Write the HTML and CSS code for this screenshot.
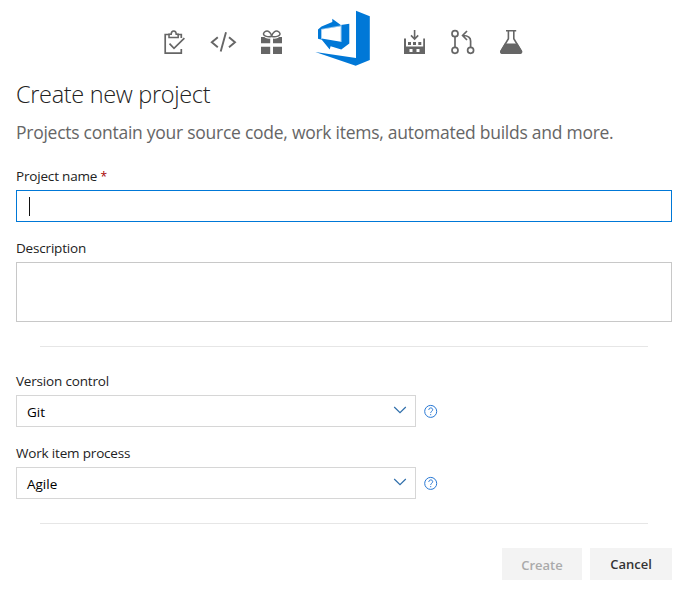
FILE: index.html
```html
<!DOCTYPE html>
<html lang="en">
<head>
<meta charset="utf-8">
<title>Create new project</title>
<link rel="stylesheet" href="styles.css">
</head>
<body>
<main class="page">
  <header class="icons">
    <svg width="24" height="26" viewBox="163 29 24 26" fill="none" stroke="#666" stroke-width="1.7"><path d="M170 34.5H165.2V53.2H181.3V49M181.3 38V34.5H177"/><path d="M169 37.6V34.2H171.2C171.2 29.8 176.2 29.8 176.2 34.2H178.2V37.6Z" stroke-width="1.5"/><path d="M169.5 43.7L174 48.3L184.4 38.2"/></svg>
    <svg class="code" width="28" height="26" viewBox="209 29 28 26" fill="none" stroke="#666" stroke-width="1.9"><path d="M217.8 37.2L211.8 42.2L217.8 47.2M229 37.2L235 42.2L229 47.2M226 32.2L220.7 51.4"/></svg>
    <svg class="gift" width="24" height="26" viewBox="260 29 24 26"><path fill="#666" d="M261 37H270.2V43.3H261ZM273 37H282V43.3H273ZM261 46.7H270.2V54H261ZM273 46.7H282V54H273Z"/><path fill="none" stroke="#fff" stroke-width="3" d="M271.7 36.5C269 38 262 36.5 265 32.5C268 29.5 271 33 271.7 36.5C272.5 33 275.5 29.5 278.5 32.5C281.5 36.5 274.5 38 271.7 36.5"/><path fill="none" stroke="#666" stroke-width="1.5" d="M271.7 36.2C269 37.5 260.5 36 264.5 32C268 29.5 271 32.5 271.7 36.2C272.5 32.5 275.5 29.5 279 32C283 36 274.5 37.5 271.7 36.2"/></svg>
    <svg class="logo" width="56" height="57" viewBox="315 10 56 57"><path fill="#0078d7" d="M356 10.7L369.8 16.3V60L355.7 65.8L315.3 52L356 58ZM318 29.4L321.5 26.6L332.3 22V18.7L340.8 25L349.3 23.7V43.5L341.3 49.4L330.6 46.3L329.7 49.6L321.8 39.8L318 38.7Z"/><path fill="#fff" d="M321.7 29.6L340.8 26.2V41.8L321.7 38.6Z"/><path fill="none" stroke="#fff" stroke-width=".5" d="M321.5 39V29.3L341 25.8M341.2 25V42"/></svg>
    <svg class="build" width="24" height="26" viewBox="403 29 24 26"><path fill="#666" d="M404 38.5H406V46.5H423.2V38.5H425V54H404ZM408 42H411V45H408ZM413 42H416V45H413ZM418.3 42H421.3V45H418.3Z"/><path fill="#fff" d="M409.5 49H412.5V52H409.5ZM416.5 49H419.5V52H416.5Z"/><path fill="none" stroke="#666" stroke-width="1.6" d="M414.6 30V38.7M411 35.4L414.6 39L418.2 35.4"/></svg>
    <svg class="pull" width="26" height="26" viewBox="449 29 26 26" fill="none" stroke="#666" stroke-width="1.7"><circle cx="455" cy="33.7" r="3"/><circle cx="455" cy="50.3" r="3"/><circle cx="470.6" cy="50.3" r="3"/><path d="M455 36.7V47.3M470.6 47.3V41Q470.6 35.6 463 35.5M467 31L462.6 35.5L467 40"/></svg>
    <svg class="flask" width="24" height="26" viewBox="499 29 24 26"><path fill="none" stroke="#666" stroke-width="1.6" d="M506 30.8H516.2M508.4 31V38.7L501 51Q500.4 53.2 502.5 53.2H519.8Q522 53.2 521.3 51L513.8 38.7V31"/><path fill="#666" d="M504.8 43.5H517.5L522.2 51.2Q522.4 54 519.8 54H502.5Q499.8 54 500.2 51.2Z"/></svg>
  </header>
  <h1 class="title">Create new project</h1>
  <p class="subtitle">Projects contain your source code, work items, automated builds and more.</p>
  <form class="form">
    <div class="label"><span>Project name</span> <span class="required">*</span></div>
    <div class="field active"><span class="caret"></span></div>
    <div class="label desc">Description</div>
    <div class="field area"></div>
    <hr class="rule">
    <div class="label version">Version control</div>
    <div class="row">
      <div class="select"><span>Git</span><svg width="14" height="8" viewBox="0 0 14 8"><path class="chevron" d="M1.2 1L7 6.6L12.8 1"/></svg></div>
      <svg class="help" width="14" height="14" viewBox="0 0 14 14"><circle cx="6.7" cy="7.4" r="6"/><path d="M4.8 5.9C4.8 3.3 8.7 3.3 8.7 5.7C8.7 7.2 6.7 7.2 6.7 8.9M6.7 10.1V11.2"/></svg>
    </div>
    <div class="label process">Work item process</div>
    <div class="row">
      <div class="select"><span>Agile</span><svg width="14" height="8" viewBox="0 0 14 8"><path class="chevron" d="M1.2 1L7 6.6L12.8 1"/></svg></div>
      <svg class="help" width="14" height="14" viewBox="0 0 14 14"><circle cx="6.7" cy="7.4" r="6"/><path d="M4.8 5.9C4.8 3.3 8.7 3.3 8.7 5.7C8.7 7.2 6.7 7.2 6.7 8.9M6.7 10.1V11.2"/></svg>
    </div>
    <hr class="rule">
    <div class="actions">
      <button class="button create" type="button" disabled>Create</button>
      <button class="button cancel" type="button">Cancel</button>
    </div>
  </form>
</main>
</body>
</html>
```
FILE: styles.css
```css
* { box-sizing: border-box; }
body {
  margin: 0;
  background: #fff;
  color: #222;
  font: 14px/20px "Open Sans", "Noto Sans", sans-serif;
}
svg { display: block; flex: none; }
.page { height: 596px; padding: 10px 22px 0 16px; }
.icons { display: flex; height: 57px; padding-left: 147px; align-items: flex-start; }
.icons svg { margin-top: 19px; }
.icons .code { margin-left: 22px; }
.icons .gift { margin-left: 23px; }
.icons .logo { margin: 0 0 0 31px; }
.icons .build { margin-left: 32px; }
.icons .pull { margin-left: 22px; }
.icons .flask { margin-left: 24px; }
.title {
  margin: 10px 0 0;
  font-size: 23.5px;
  line-height: 34px;
  font-weight: 300;
  letter-spacing: -0.32px;
  white-space: nowrap;
}
.subtitle {
  margin: 8px 0 0;
  color: #666;
  font-size: 17.5px;
  line-height: 26px;
  letter-spacing: -0.26px;
  white-space: nowrap;
}
.form { margin: 21px 0 0; }
.label { height: 24px; font-size: 13.5px; letter-spacing: -0.18px; white-space: nowrap; }
.required { color: #a80000; font-size: 12px; }
.field { border: 1px solid #c8c8c8; height: 32px; }
.active { border-color: #0078d7; padding: 6px 12px; }
.caret { display: block; width: 1px; height: 19px; background: #111; }
.desc { margin-top: 16px; }
.area { height: 60px; }
.rule { height: 1px; margin: 24px 24px 0; border: 0; background: #e6e6e6; }
.version { margin-top: 24px; }
.process { margin-top: 16px; }
.row { display: flex; gap: 8px; align-items: center; }
.select {
  display: flex;
  justify-content: space-between;
  width: 400px;
  height: 32px;
  padding: 6px 8px 0 10px;
  border: 1px solid #d6d6d6;
  color: #000;
  font-size: 13.5px;
}
.select svg { margin-top: 4px; }
.chevron { fill: none; stroke: #2f6eaa; stroke-width: 1.2; }
.help { fill: none; stroke: #2878d4; stroke-width: 1; }
.actions { display: flex; justify-content: flex-end; gap: 8px; margin-top: 24px; }
.button {
  height: 32px;
  padding: 0;
  border: 0;
  background: #f3f3f3;
  font: 600 13px/20px "Open Sans", "Noto Sans", sans-serif;
}
.create { width: 80px; padding-top: 2px; color: #aaa; }
.cancel { width: 82px; color: #333; }
```
